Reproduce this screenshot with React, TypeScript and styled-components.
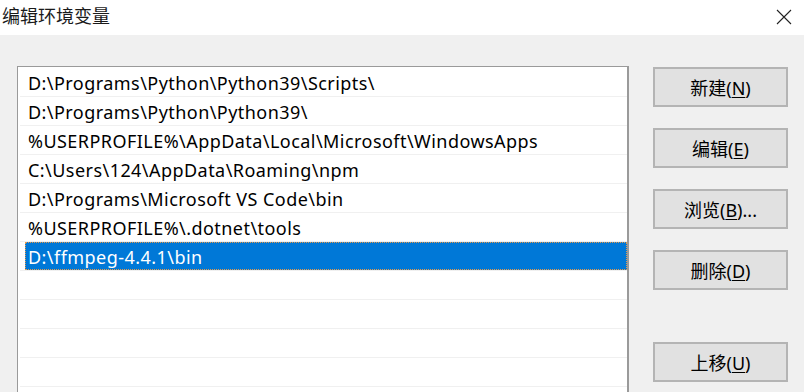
import React from 'react'
import styled, { createGlobalStyle } from 'styled-components'

const GlobalStyle = createGlobalStyle`
  html, body {
    margin: 0;
    padding: 0;
    background: #f0f0f0;
  }
  body {
    font-family: "Noto Sans", "Noto Sans CJK SC", sans-serif;
    color: #000;
  }
`

const Window = styled.div`
  width: 804px;
  height: 392px;
  overflow: hidden;
  display: flex;
  flex-direction: column;
  background: #f0f0f0;
`

const TitleBar = styled.div`
  height: 35px;
  flex-shrink: 0;
  background: #fff;
  display: flex;
  align-items: center;
  justify-content: space-between;
  padding: 0 12px 6px 2px;
  box-sizing: border-box;
`

const Title = styled.span`
  font-family: "Noto Sans CJK SC", sans-serif;
  font-size: 18px;
  color: #1a1a1a;
`

const CloseIcon = styled.svg`
  width: 16px;
  height: 16px;
  margin-top: 4px;
`

const Body = styled.div`
  flex: 1;
  display: grid;
  grid-template-columns: 612px 135px;
  column-gap: 24px;
  padding: 31px 0 0 17px;
  align-items: start;
`

const List = styled.div`
  height: 340px;
  border: 1px solid #9a9a9a;
  border-right-width: 2px;
  background: #fff;
  padding-top: 1px;
  box-sizing: border-box;
`

const Row = styled.div`
  height: 29px;
  margin-left: 2px;
  padding-left: 5px;
  border-bottom: 1px solid #f0f0f0;
  box-sizing: border-box;
  display: flex;
`

const Cell = styled.div<{ $selected?: boolean }>`
  flex: 1;
  height: 28px;
  padding-left: 3px;
  padding-top: 2px;
  box-sizing: border-box;
  display: flex;
  align-items: center;
  font-size: 18px;
  letter-spacing: 0.45px;
  white-space: nowrap;
  color: ${p => (p.$selected ? '#fff' : '#000')};
  background: ${p => (p.$selected ? '#0078d7' : 'transparent')};
  outline: ${p => (p.$selected ? '1px dotted #e59a4c' : 'none')};
  outline-offset: -1px;
`

const Buttons = styled.div`
  display: flex;
  flex-direction: column;
  gap: 21px;
  padding-top: 1px;
`

const Button = styled.button<{ $spaced?: boolean }>`
  height: 40px;
  width: 135px;
  background: #e1e1e1;
  border: 2px solid #b4b4b4;
  box-sizing: border-box;
  font-family: "Noto Sans", "Noto Sans CJK SC", sans-serif;
  font-size: 18px;
  color: #000;
  padding: 0;
  margin-top: ${p => (p.$spaced ? '31px' : '0')};
`

const Key = styled.span`
  text-decoration: underline;
  text-underline-offset: 2px;
`

const paths = [
  'D:\\Programs\\Python\\Python39\\Scripts\\',
  'D:\\Programs\\Python\\Python39\\',
  '%USERPROFILE%\\AppData\\Local\\Microsoft\\WindowsApps',
  'C:\\Users\\124\\AppData\\Roaming\\npm',
  'D:\\Programs\\Microsoft VS Code\\bin',
  '%USERPROFILE%\\.dotnet\\tools',
  'D:\\ffmpeg-4.4.1\\bin',
  '',
  '',
  '',
  '',
  '',
]

const actions = [
  { label: '新建', key: 'N' },
  { label: '编辑', key: 'E' },
  { label: '浏览', key: 'B', tail: '...' },
  { label: '删除', key: 'D' },
  { label: '上移', key: 'U', spaced: true },
]

export default function App() {
  return (
    <>
      <GlobalStyle />
      <Window>
        <TitleBar>
          <Title>编辑环境变量</Title>
          <CloseIcon viewBox="0 0 16 16">
            <path d="M1 1 L15 15 M15 1 L1 15" stroke="#222" strokeWidth="1.1" fill="none" />
          </CloseIcon>
        </TitleBar>
        <Body>
          <List>
            {paths.map((p, i) => (
              <Row key={i}>
                <Cell $selected={i === 6}>{p}</Cell>
              </Row>
            ))}
          </List>
          <Buttons>
            {actions.map(a => (
              <Button key={a.key} $spaced={a.spaced}>
                {a.label}(<Key>{a.key}</Key>){a.tail}
              </Button>
            ))}
          </Buttons>
        </Body>
      </Window>
    </>
  )
}
